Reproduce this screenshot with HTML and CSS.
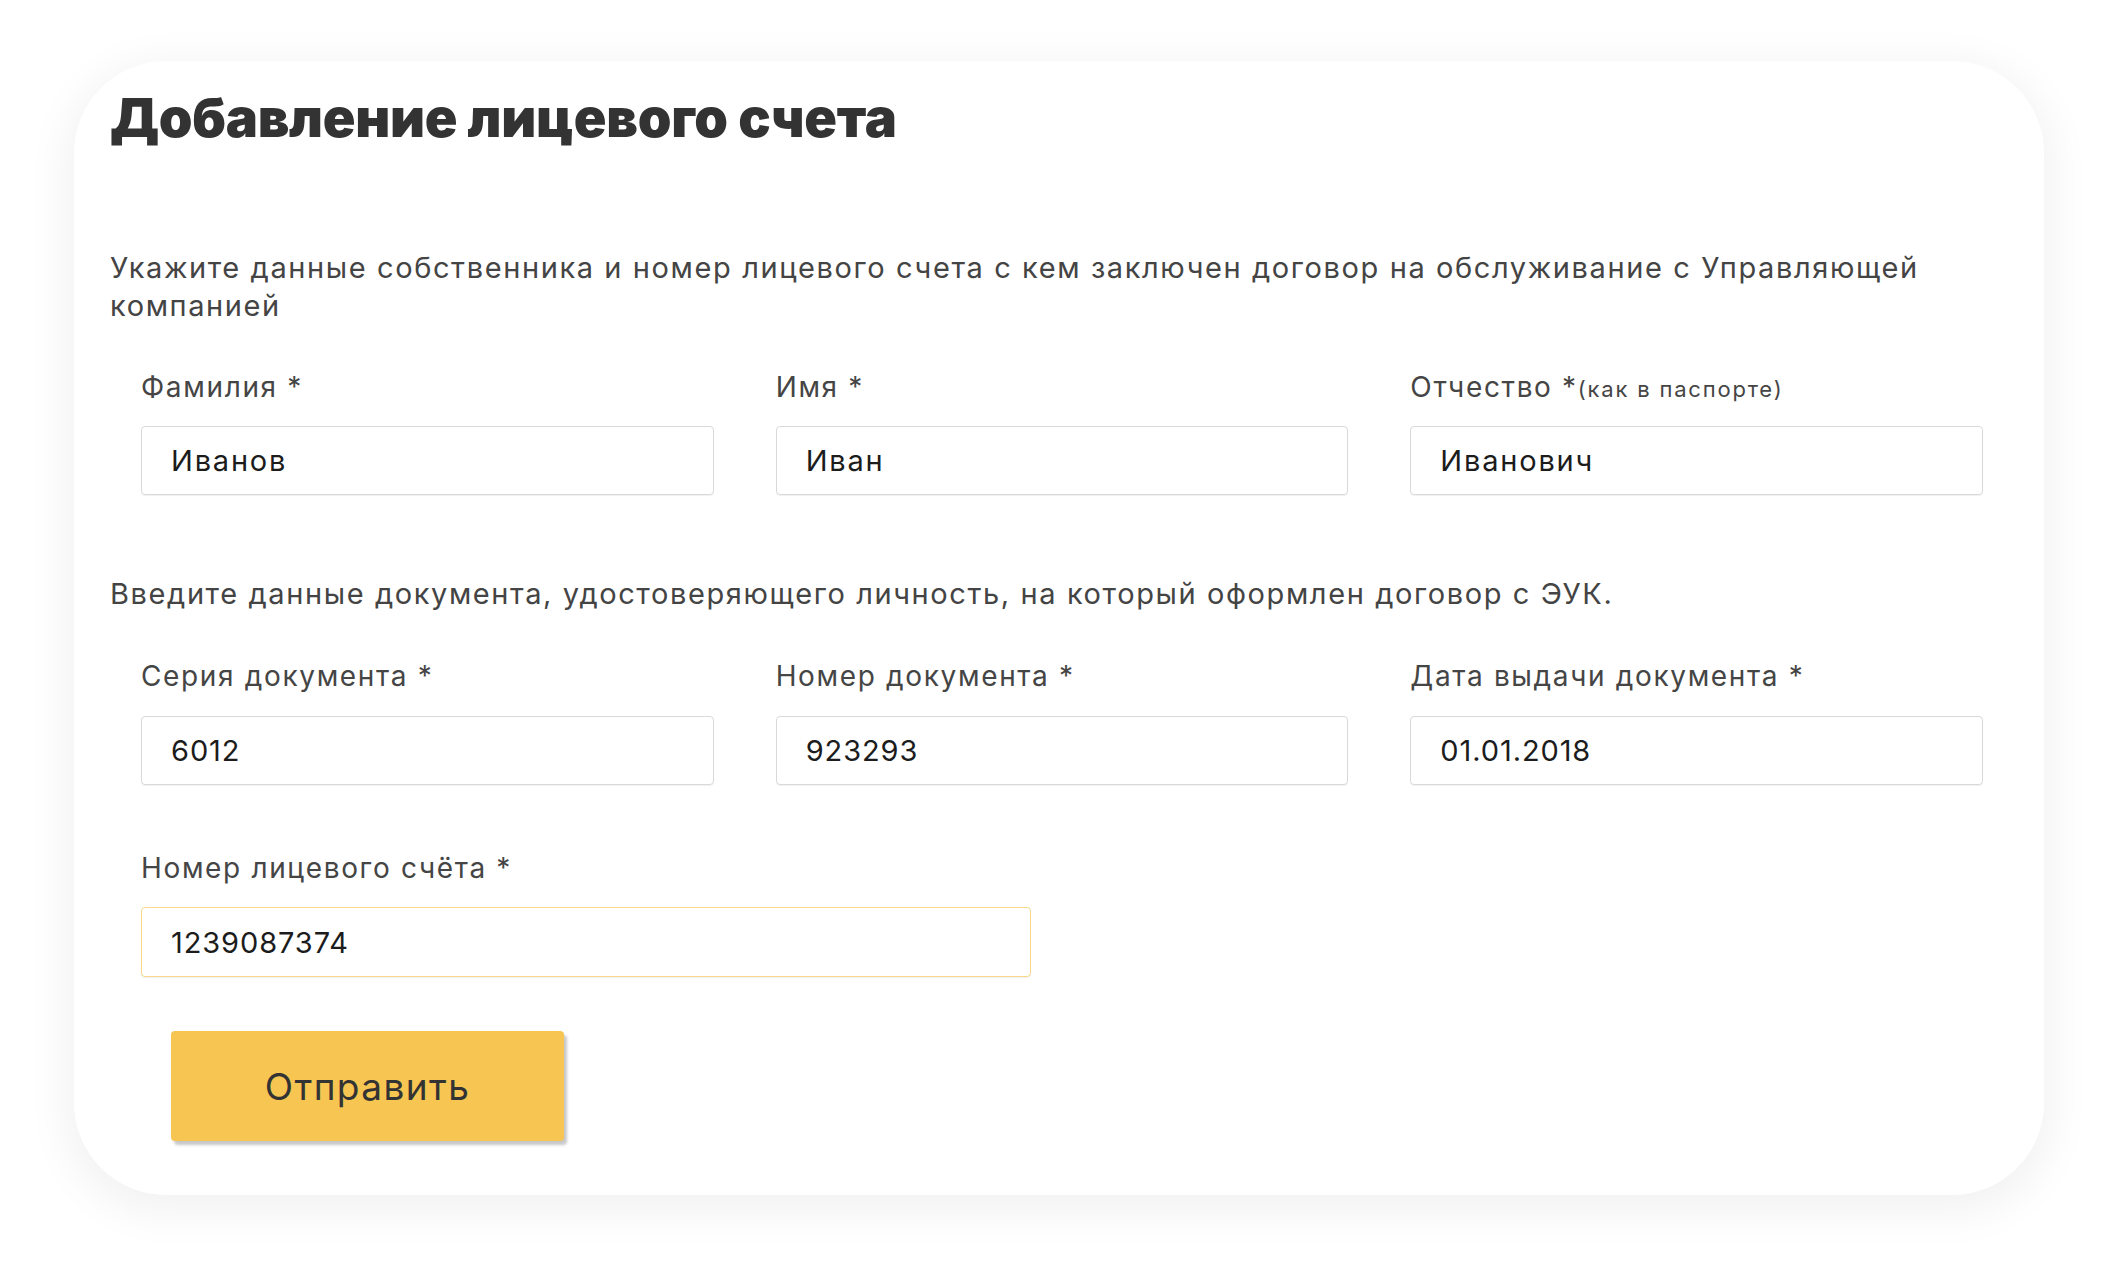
FILE: index.html
```html
<!DOCTYPE html>
<html lang="ru">
<head>
<meta charset="utf-8">
<title>Добавление лицевого счета</title>
<link rel="stylesheet" href="styles.css">
</head>
<body>
<div class="page">
  <section class="card">
    <h1 class="title">Добавление лицевого счета</h1>
    <p class="lead lead-owner">Укажите данные собственника и номер лицевого счета с кем заключен договор на обслуживание с Управляющей компанией</p>
    <div class="grid3 row-owner">
      <div class="field">
        <div class="label">Фамилия *</div>
        <div class="input">Иванов</div>
      </div>
      <div class="field">
        <div class="label">Имя *</div>
        <div class="input">Иван</div>
      </div>
      <div class="field">
        <div class="label">Отчество *<span class="hint">(как в паспорте)</span></div>
        <div class="input">Иванович</div>
      </div>
    </div>
    <p class="lead lead-doc">Введите данные документа, удостоверяющего личность, на который оформлен договор с ЭУК.</p>
    <div class="grid3 row-doc">
      <div class="field">
        <div class="label">Серия документа *</div>
        <div class="input num">6012</div>
      </div>
      <div class="field">
        <div class="label">Номер документа *</div>
        <div class="input num">923293</div>
      </div>
      <div class="field">
        <div class="label">Дата выдачи документа *</div>
        <div class="input num">01.01.2018</div>
      </div>
    </div>
    <div class="grid2 row-account">
      <div class="field">
        <div class="label">Номер лицевого счёта *</div>
        <div class="input num input-active">1239087374</div>
      </div>
    </div>
    <div class="actions">
      <button class="btn" type="button">Отправить</button>
    </div>
  </section>
</div>
</body>
</html>
```
FILE: styles.css
```css
html, body {
  margin: 0;
  padding: 0;
  background: #ffffff;
}
body {
  font-family: Inter, "Noto Sans", sans-serif;
  color: #444444;
}
.page {
  padding: 61px 68px 81px 74px;
}
.card {
  background: #ffffff;
  border-radius: 92px;
  box-shadow: 0 10px 40px 10px rgba(0, 0, 0, 0.05);
  padding: 25px 30px 52px 36px;
  height: 1134px;
  box-sizing: border-box;
}
.title {
  margin: 0;
  font-size: 54px;
  line-height: 64px;
  font-weight: 900;
  color: #333333;
  letter-spacing: -0.3px;
}
.lead {
  margin: 0;
  font-size: 29px;
  line-height: 38px;
  letter-spacing: 1.6px;
  color: #444444;
}
.lead-owner {
  margin-top: 99px;
}
.lead-doc {
  margin-top: 80px;
}
.grid3 {
  display: grid;
  grid-template-columns: 1fr 1fr 1fr;
  column-gap: 62px;
  margin: 0 31px;
}
.grid2 {
  display: grid;
  grid-template-columns: 1fr 1fr;
  column-gap: 62px;
  margin: 0 31px;
}
.row-owner {
  margin-top: 46px;
}
.row-doc {
  margin-top: 47px;
}
.row-account {
  margin-top: 67px;
}
.label {
  height: 32px;
  font-size: 28px;
  line-height: 32px;
  letter-spacing: 1.65px;
  color: #454545;
  white-space: nowrap;
}
.hint {
  font-size: 22px;
  line-height: 1;
  letter-spacing: 1.8px;
}
.input {
  margin-top: 23px;
  height: 69px;
  box-sizing: border-box;
  border: 1px solid #d9d9d9;
  border-radius: 4px;
  box-shadow: 0 1px 1px rgba(0, 0, 0, 0.06);
  padding: 0 29px;
  display: flex;
  align-items: center;
  font-size: 29px;
  letter-spacing: 1.8px;
  color: #1c1c1c;
}
.row-doc .input {
  margin-top: 24px;
}
.num {
  letter-spacing: 0.9px;
}
.input-active {
  border-color: #f8d98a;
  height: 70px;
}
.actions {
  margin-top: 54px;
  padding-left: 61px;
}
.btn {
  width: 393px;
  height: 110px;
  border: 0;
  border-radius: 4px;
  background: #f6c552;
  box-shadow: 3px 4px 3px rgba(0, 0, 0, 0.22);
  font-family: Inter, "Noto Sans", sans-serif;
  font-size: 37px;
  font-weight: 400;
  letter-spacing: 1.4px;
  color: #333333;
  padding: 0;
}
```
